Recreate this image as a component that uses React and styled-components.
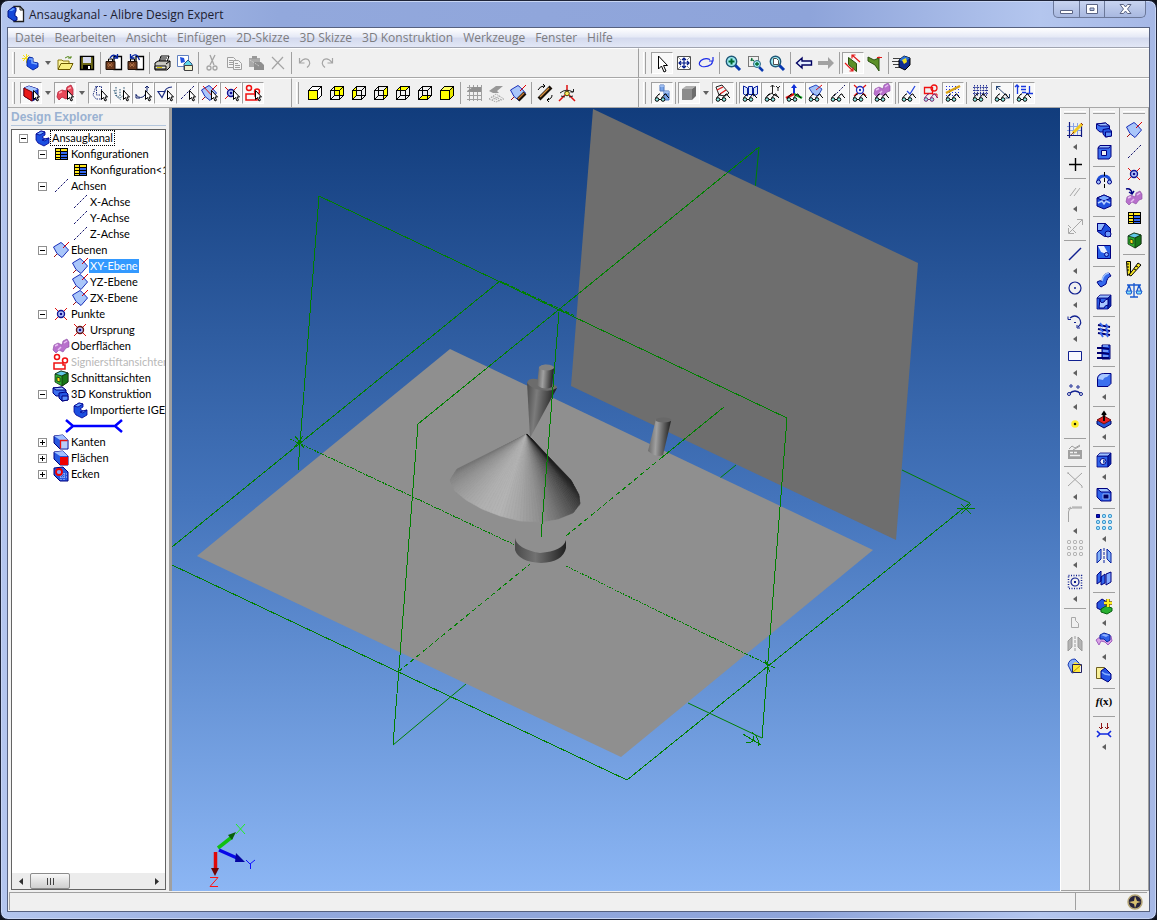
import React, { useState } from "react";
import styled, { createGlobalStyle } from "styled-components";

/* ---------- small drawings shared by several icons ---------- */

const Glasses = ({ color = "#000" }) => (
  <g fill='none' stroke={color}>
    <path d='M3.500 15L7 11h1M9.500 15l3.500-4h1l1 2 2 2M7 16.500h2' />
    <circle cx='5' cy='16.500' r='1.800' fill='#8ff0e8' />
    <circle cx='11' cy='16.500' r='1.800' fill='#8ff0e8' />
  </g>
);

const Cursor = () => (
  <path d='M12.500 7.500v9l2-2 1.500 3.500 1.500-.800-1.500-3.200h2.500z' fill='#fff' stroke='#000' />
);

const Block = () => (
  <g stroke='#000090' strokeWidth='.8'>
    <path d='M4 6l5-3 4 1v3l-3 2 3 2 4-1v5l-5 3-6-3-2-3z' fill='#1c4fe0' />
    <path d='M4 6l5-3 4 1-5 3z' fill='#6fa4ff' />
    <path d='M10 12l3-1 4-1-4 3z' fill='#5c92ff' />
  </g>
);

const Plane = () => (
  <g>
    <path d='M3 17L17 3' stroke='#a01010' />
    <path d='M2.500 7l7.500-4.500 2.500 2 5 5.500-6.500 7.500-5-4z' fill='#a9c6fa' stroke='#1a2fb8' />
    <path d='M12 8l6-6' stroke='#e00000' />
  </g>
);

const Cross = ({ ring = "#101090" }) => (
  <g>
    <path d='M4 4l12 12M16 4L4 16' stroke='#e01010' />
    <circle cx='10' cy='10' r='3.500' fill='#b8c8ff' stroke={ring} strokeWidth='1.400' />
    <circle cx='10' cy='10' r='1.300' fill='#101090' />
  </g>
);

const Surface = () => (
  <g>
    <path
      d='M2 14l1-5 4-2 4 2 1-4 4-2 2 3v5l-3 1-3 4-4-2-3 3z'
      fill='#b870cc'
      stroke='#8848a0'
      strokeWidth='.6'
    />
    <path d='M4 10l3-1.500M13 7l3-2M7 14l3-3' stroke='#e8c0f2' strokeWidth='1.500' fill='none' />
  </g>
);

const Redline = () => (
  <g fill='none' stroke='#f01010' strokeWidth='1.500'>
    <circle cx='6' cy='5' r='2.500' />
    <circle cx='14' cy='8.500' r='2.500' />
    <path d='M3 11h9v2h2v4H3z' />
  </g>
);

const Sheet = () => (
  <g shapeRendering='crispEdges'>
    <path d='M4 4h13v12H4z' fill='#3468f0' />
    <path d='M4 4h5v12H4z' fill='#ffe820' />
    <path d='M4 4h13v3H4z' fill='#ffe820' />
    <path d='M4.500 4.500h12v11h-12zM9.500 4v12M4 7.500h13M4 10.500h13M4 13.500h13' fill='none' stroke='#000' />
  </g>
);

const Axis = () => (
  <path d='M4 16L17 3' stroke='#10106a' strokeDasharray='2.500 1.500' />
);

const Section = () => (
  <g stroke='#103010' strokeWidth='.8'>
    <path d='M4 6l6-3 7 2v9l-6 4-7-4z' fill='#2fae2f' />
    <path d='M4 6l6-3 7 2-6 3z' fill='#62c8e8' />
    <path d='M11 8l6-3v9l-6 4z' fill='#187818' />
    <path d='M6 9l3 1v4l-3-1z' fill='#ffe020' />
  </g>
);

const Cube = ({ front = "#fff", top = "#fff", side = "#fff" }) => (
  <g stroke='#000' shapeRendering='crispEdges'>
    <path d='M3.500 7.500l4-4h9l-4 4z' fill={top} />
    <path d='M12.500 7.500l4-4v9l-4 4z' fill={side} />
    <path d='M3.500 7.500h9v9h-9z' fill={front} />
  </g>
);

const Wire = ({ children }) => (
  <g stroke='#000' fill='none' shapeRendering='crispEdges'>
    {children}
    <path d='M3.500 7.500h9v9h-9zM7.500 3.500h9v9h-9zM3.500 7.500l4-4M12.500 7.500l4-4M3.500 16.500l4-4M12.500 16.500l4-4' />
  </g>
);

const Solid = ({ fill = "#2f64ea", light = "#9cc0ff", dark = "#0a2aa8" }) => (
  <g stroke='#000080' strokeWidth='.8'>
    <path d='M3 6h11v11H3z' fill={fill} />
    <path d='M3 6l3-3h11l-3 3z' fill={light} />
    <path d='M14 6l3-3v11l-3 3z' fill={dark} />
  </g>
);

const Book = () => (
  <g>
    <path d='M10 3.500h7.500v13H10z' fill='#fff' stroke='#000' strokeWidth='1.300' />
    <path d='M2 8.500h9v8H2z' fill='#6b3a1e' stroke='#201008' />
    <path d='M4.500 8V6h4v2' fill='none' stroke='#000' />
    <path d='M4 10l4 4M8 10l-4 4M3 12h6' stroke='#c08050' strokeWidth='.7' />
  </g>
);

const Lens = () => (
  <g>
    <path d='M12 12l5 5' stroke='#0838b0' strokeWidth='3' />
    <circle cx='8.500' cy='8.500' r='5.200' fill='#9eeaf0' stroke='#205878' strokeWidth='1.400' />
  </g>
);

const Dots = ({ color, fill }) => (
  <g fill={fill} stroke={color}>
    {[4, 10, 16].map((y) =>
      [4, 10, 16].map((x) => <rect key={x + "-" + y} x={x - 1.5} y={y - 1.5} width='3' height='3' rx='1' />)
    )}
  </g>
);

const Mesh = ({ color }) => (
  <path
    d='M3 4.500h15M3 8.500h15M3 12.500h15M3 16.500h15M5.500 2v16M9.500 2v16M13.500 2v16M17.500 2v16'
    stroke={color}
    fill='none'
    shapeRendering='crispEdges'
  />
);

const MirrorShape = ({ fill, color }) => (
  <g fill={fill} stroke={color}>
    <path d='M3 7l4-4v10l-4 4zM17 7l-4-4v10l4 4z' />
    <path d='M10 2v16' strokeDasharray='3 1' />
  </g>
);

const icons = {
  newPart: (
    <g>
      <path d='M5.500 1v9M1 5.500h9M2 2l6 6M8 2L2 8' stroke='#f4dc20' />
      <path d='M6 8l2-4 4 1v4l5 1v4l-5 3-6-4z' fill='#1c50e8' stroke='#0828a0' />
      <path d='M8 6l3 0v4l5 1' stroke='#78a8ff' fill='none' strokeWidth='1.500' />
    </g>
  ),
  open: (
    <g>
      <path d='M3 16V7h4l1 1h6v3' fill='#fff7a0' stroke='#8a7a10' />
      <path d='M3 16.500l3-6h12l-3 6z' fill='#f8f080' stroke='#6a5a00' />
      <path d='M10 5q3-3 6 0v-2M16 5h-3' stroke='#5a8a20' fill='none' />
    </g>
  ),
  save: (
    <g>
      <path d='M3.500 3.500h13v13h-13z' fill='#6e6a18' stroke='#000' strokeWidth='1.400' />
      <path d='M6 4h8v6H6z' fill='#d8dcf0' />
      <path d='M6 12h8v5H6z' fill='#000' />
      <path d='M11 13h2v3h-2z' fill='#fff' />
    </g>
  ),
  checkIn: (
    <g>
      <Book />
      <path d='M6 5q3-5 7-1M13.500 1v4h-4' stroke='#0020a0' fill='none' strokeWidth='1.300' />
    </g>
  ),
  checkOut: (
    <g>
      <Book />
      <path d='M4.500 1v4h4M4.500 5q4-5 7-2l2 4' stroke='#0020a0' fill='none' strokeWidth='1.300' />
    </g>
  ),
  print: (
    <g stroke='#000'>
      <path d='M6 9l2-6h8l-2 6z' fill='#fff' />
      <path d='M8 5h6M7 7h6' />
      <path d='M2 10l3-2h12v6l-3 3H2z' fill='#c8c8c0' />
      <path d='M2 13h11v3H2zM13 11l4-3' fill='#e8e8d8' />
      <path d='M4 14.500h5' stroke='#d8c800' />
    </g>
  ),
  publish: (
    <g>
      <path d='M2.500 2.500h11v11h-11z' fill='#fff' stroke='#6080c0' />
      <path d='M5 4l4 1 1 4-4 1z' fill='#2050e0' />
      <path d='M9 11l4-4 4 4v6H9z' fill='#60d8e8' stroke='#305080' />
      <path d='M9.500 12.500h8v5h-8z' fill='#f0f0c8' stroke='#404040' />
    </g>
  ),
  cut: (
    <g stroke='#a4a4a4' fill='none' strokeWidth='1.300'>
      <path d='M8 2l4 10M13 2L8 12' />
      <circle cx='7' cy='15' r='2' />
      <circle cx='13' cy='15' r='2' />
    </g>
  ),
  copy: (
    <g stroke='#a0a0a0' fill='#f4f4f4'>
      <path d='M3.500 4.500h6l2 2v8h-8zM5 7.500h4M5 9.500h4M5 11.500h4' />
      <path d='M9.500 7.500h5l3 3v6h-8zM11 10.500h3M11 12.500h5M11 14.500h5' />
    </g>
  ),
  paste: (
    <g>
      <path d='M3 5h11v9H3z' fill='#aaa' />
      <path d='M6 3h5v3H6z' fill='#999' />
      <path d='M8 9h7l3 3v5H8z' fill='#8e8e8e' />
      <path d='M4 7l9 6' stroke='#ddd' strokeDasharray='1 1' />
    </g>
  ),
  remove: <path d='M4 4l12 12M15 4L4 16' stroke='#a4a4a4' strokeWidth='1.200' />,
  undo: <path d='M4.500 5v5h5M5 9.500q4-5 8-3 4 4-1 8' stroke='#a4a4a4' fill='none' strokeWidth='1.200' />,
  redo: <path d='M15.500 5v5h-5M15 9.500q-4-5-8-3-4 4 1 8' stroke='#a4a4a4' fill='none' strokeWidth='1.200' />,
  pointer: <path d='M6.500 3v13l3-3 2.500 6 2-1-2.500-5.500h4z' fill='#fff' stroke='#000' />,
  pan: (
    <g fill='none'>
      <path d='M3.500 3.500h13v13h-13z' stroke='#505050' fill='#fff' />
      <path d='M4 4l3 3M16 4l-3 3M4 16l3-3M16 16l-3-3' stroke='#909090' />
      <path d='M10 5v10M5 10h10M8 7l2-2 2 2M8 13l2 2 2-2M7 8l-2 2 2 2M13 8l2 2-2 2' stroke='#001888' strokeWidth='1.200' />
    </g>
  ),
  rotate: (
    <path
      d='M14 6.500q-5-2-9 1-4 4 1 6 5 1 9-2 2-2 1-4M17 4v4h-4'
      stroke='#1828e8'
      fill='none'
      strokeWidth='1.200'
    />
  ),
  zoomIn: (
    <g>
      <Lens />
      <path d='M8.500 5.500v6M5.500 8.500h6' stroke='#006830' strokeWidth='2' />
    </g>
  ),
  zoomWindow: (
    <g>
      <path d='M3.500 3.500h10v10h-10z' stroke='#000' fill='none' strokeDasharray='1 1' />
      <path d='M14 14l4 4' stroke='#0838b0' strokeWidth='2.500' />
      <circle cx='12' cy='11' r='3.500' fill='#9eeaf0' stroke='#306888' />
      <path d='M12 9v4M10 11h4M6 6l3 2M7 5l-1 3' stroke='#006830' strokeWidth='1.300' />
    </g>
  ),
  zoomFit: (
    <g>
      <Lens />
      <path d='M6.500 5.500h3l2 2v4h-5z' fill='#fff' stroke='#505050' />
    </g>
  ),
  back: <path d='M2.500 10L8 5v3h9.500v4H8v3z' fill='#e4eeff' stroke='#000060' strokeWidth='1.400' />,
  next: <path d='M18 10l-6-6v4H2v4h10v4z' fill='#a2a2a2' />,
  flipPlane: (
    <g>
      <path d='M5.500 4.500l8 6v8l-8-7z' fill='#5c9028' stroke='#2a5010' />
      <path d='M9 2l8 7M9 5.500V2h3.500M2 10l8 8M10 14.500V18H6.500' stroke='#e01818' fill='none' strokeWidth='1.200' />
    </g>
  ),
  normalPlane: (
    <g>
      <path d='M3 4l6 3 5-2v13l-4-6-7-4z' fill='#5c9028' stroke='#2a5010' />
      <path d='M14 5.500v-2M12 4.500h5' stroke='#e01818' />
    </g>
  ),
  render: (
    <g>
      <path d='M1 5.500h8M0 8.500h9M1 11.500h8M3 14.500h6' stroke='#404040' />
      <path d='M7 7l5-4 6 2v7l-5 5-6-3z' fill='#102c90' stroke='#000' />
      <path d='M7 7l5-4 6 2-5 4z' fill='#2a70d8' />
      <path d='M10 7l4-2 1 4-3 2z' fill='#f0e020' />
    </g>
  ),
  pickSolid: (
    <g>
      <path d='M3 5l5-2 9 3v9l-6 3-8-5z' fill='#2450d8' stroke='#000080' />
      <path d='M3 5l5-2 9 3-6 3z' fill='#a8c8ff' />
      <path d='M3 5l8 4v9l-8-5z' fill='#e81818' stroke='#800000' />
      <Cursor />
    </g>
  ),
  pickSurface: (
    <g>
      <path d='M2 14l1-5 4-2 4 1 1-4 4-2 2 4v6l-4 1-3 3-4-2-3 3z' fill='#e84858' stroke='#b02038' strokeWidth='.8' />
      <path d='M4 10l3-1.500M13 6l3-1.500' stroke='#ffb0b8' fill='none' strokeWidth='1.500' />
      <Cursor />
    </g>
  ),
  pickBody: (
    <g>
      <path d='M7.500 3.500h5v8l5 1M7 3l-3 9 3 4h6M7.500 4v8h4' fill='none' stroke='#203080' strokeDasharray='1.500 1' />
      <Cursor />
    </g>
  ),
  pickFace: (
    <g>
      <path d='M5 4v8l4 3 4-3V4M3 7l2 6 5 4M9 6v8' fill='none' stroke='#205070' strokeDasharray='1.500 1.200' />
      <Cursor />
    </g>
  ),
  pickEdge: (
    <g>
      <path d='M3 12q5 5 9 0 3-4 2-8M12 5l2-2 2 2' fill='none' stroke='#10206a' />
      <path d='M3 11v4h4' stroke='#10206a' fill='none' />
      <Cursor />
    </g>
  ),
  pickSketch: (
    <g>
      <path d='M3 8.500h7l-3 6zM9 11q1-7 8-7' fill='none' stroke='#1c2c80' strokeWidth='1.200' />
      <Cursor />
    </g>
  ),
  pickAxis: (
    <g>
      <Axis />
      <Cursor />
    </g>
  ),
  pickPlane: (
    <g>
      <Plane />
      <path d='M4 3l12 13' stroke='#e01010' />
      <Cursor />
    </g>
  ),
  pickPoint: (
    <g>
      <Cross />
      <Cursor />
    </g>
  ),
  pickRedline: (
    <g>
      <Redline />
      <Cursor />
    </g>
  ),
  front: <Cube front='#ffff00' />,
  rear: (
    <Wire>
      <path d='M7.500 3.500h9v9h-9z' fill='#ffff00' />
    </Wire>
  ),
  left: (
    <Wire>
      <path d='M3.500 7.500l4-4v9l-4 4z' fill='#ffff00' />
    </Wire>
  ),
  right: (
    <Wire>
      <path d='M12.500 7.500l4-4v9l-4 4z' fill='#ffff00' />
    </Wire>
  ),
  top: (
    <Wire>
      <path d='M3.500 7.500l4-4h9l-4 4z' fill='#ffff00' />
    </Wire>
  ),
  bottom: (
    <Wire>
      <path d='M3.500 16.500l4-4h9l-4 4z' fill='#ffff00' />
    </Wire>
  ),
  iso: <Cube front='#ffff00' top='#ffff60' side='#e8e800' />,
  gridGrey: (
    <g>
      <Mesh color='#a0a0a0' />
      <path d='M3 8l6-4h8v5H8z' fill='#909090' />
    </g>
  ),
  stackGrey: (
    <g>
      <path d='M3 8l7-5h7l-6 5 2 2H7z' fill='#989898' />
      <path d='M3 16l7-5 8 5-8 3zM5 14l9 4M14 13l-8 4M7 13l9 4' fill='none' stroke='#a8a8a8' strokeDasharray='1.500 1' />
    </g>
  ),
  lookAt: (
    <g>
      <Plane />
      <path d='M10 17l7-7' stroke='#181008' strokeWidth='4' />
      <path d='M10 16l6-6' stroke='#c87830' strokeWidth='1.500' />
    </g>
  ),
  orient: (
    <g>
      <path d='M4 16L16 4' stroke='#181008' strokeWidth='4' />
      <path d='M5 14l9-9' stroke='#d89040' strokeWidth='1.500' />
      <path d='M3 7q2-4 6-4M8 1l2 2-2 2M17 12q0 4-5 5M14 15l-2 2 2 2' stroke='#000' fill='none' />
    </g>
  ),
  triad: (
    <g>
      <path d='M10 8V2M8 12l-6 6M12 12l6 6' stroke='#e01010' strokeWidth='1.500' />
      <path d='M3 10q6-5 13-1M16.500 6v3h-3M4 13l4 1M12 14l4-1' stroke='#202020' fill='none' />
      <circle cx='10' cy='10.500' r='2.300' fill='#ffe860' stroke='#404000' />
    </g>
  ),
  showParts: (
    <g>
      <path d='M8 2h4v6H8zM12 8h5v9h-5z' fill='#78a4e8' stroke='#5078c0' />
      <path d='M8 3h4M12 9h5' stroke='#c8dcff' />
      <Glasses />
    </g>
  ),
  shaded: (
    <g>
      <path d='M3 6h10v11H3z' fill='#8c8c8c' />
      <path d='M3 6l4-3h10l-4 3z' fill='#b0b0b0' />
      <path d='M13 6l4-3v10l-4 4z' fill='#6c6c6c' />
    </g>
  ),
  showCyl: (
    <g>
      <path d='M3 4l6-2 7 8-4 3-6-1z' fill='#f4f4f4' stroke='#202020' />
      <path d='M4 7l6-3M7 11l6-4' stroke='#e01818' strokeWidth='1.300' />
      <Glasses />
    </g>
  ),
  showSection: (
    <g>
      <path d='M3.500 3l4 2v8l-4-2zM17.500 3l-4 2v8l4-2zM8.500 3.500h4v8h-4z' fill='#dce8ff' stroke='#0820a0' />
      <Glasses />
    </g>
  ),
  showOrigin: (
    <g>
      <path d='M10.500 2v9l6 3M8.500 4l2-2 2 2M5 13l5-3M14 3l2 2 2-2M16 5v3' stroke='#202020' fill='none' />
      <Glasses />
    </g>
  ),
  showTriad: (
    <g>
      <path d='M10 11V3' stroke='#1030d8' strokeWidth='2' />
      <path d='M10 11l8 4' stroke='#10a020' strokeWidth='2.500' />
      <path d='M10 11l-8 4' stroke='#e01010' strokeWidth='2.500' />
      <path d='M7 5l3-4 3 4z' fill='#1030d8' />
      <Glasses />
    </g>
  ),
  showPlane: (
    <g>
      <path d='M3 5l7-3 6 4-4 7-5-2z' fill='#a0c0f8' stroke='#2848c0' />
      <path d='M10 7l6-5' stroke='#e01010' />
      <Glasses />
    </g>
  ),
  showAxis: (
    <g>
      <path d='M6 13L17 2' stroke='#101060' strokeDasharray='2 1.500' />
      <Glasses />
    </g>
  ),
  showPoint: (
    <g>
      <path d='M4 2l12 11M16 2L4 13' stroke='#e01010' strokeWidth='1.200' />
      <circle cx='10' cy='7' r='3.500' fill='#fff' stroke='#2030c0' strokeWidth='1.300' />
      <circle cx='10' cy='7' r='1.200' fill='#2030c0' />
      <Glasses />
    </g>
  ),
  showSurface: (
    <g>
      <g transform='translate(0 -3)'>
        <Surface />
      </g>
      <Glasses />
    </g>
  ),
  showSketch: (
    <g>
      <path d='M8 8l3 3 5-8' stroke='#2848e0' fill='none' strokeWidth='1.300' />
      <Glasses />
    </g>
  ),
  showRedline: (
    <g>
      <path d='M3.500 4.500h8v6h-8z' fill='none' stroke='#f01010' strokeWidth='1.300' />
      <circle cx='13' cy='5' r='3' fill='none' stroke='#f01010' strokeWidth='1.300' />
      <path d='M11 11h5v4' fill='none' stroke='#f01010' />
      <Glasses color='#7a2070' />
    </g>
  ),
  showPen: (
    <g>
      <path d='M3 3.500h15M3 6.500h15M3 9.500h15M3 12.500h15' stroke='#2030e0' strokeDasharray='1 2' />
      <path d='M3 10l14-7' stroke='#d8a010' strokeWidth='2.500' />
      <Glasses />
    </g>
  ),
  showGrid: (
    <g>
      <path
        d='M4.500 2v11M7.500 2v11M10.500 2v11M13.500 2v11M16.500 2v11M3 4.500h15M3 7.500h15M3 10.500h15'
        stroke='#2c3898'
        strokeDasharray='1.500 .8'
      />
      <Glasses />
    </g>
  ),
  showDim: (
    <g>
      <path d='M4 3l13 12M4.500 7V3.500h4M17.500 11v4h-4' stroke='#284878' fill='none' />
      <Glasses />
    </g>
  ),
  showConstraint: (
    <g>
      <path d='M3.500 2v9M1 4l2-2 2 2M7 3.500h5M7 6.500h5M8 9.500h4M15.500 3v7M12 10.500h7' stroke='#1838e0' fill='none' strokeWidth='1.300' />
      <Glasses />
    </g>
  ),
  sketch: (
    <g>
      <path d='M4.500 3v15M8.500 3v13M12.500 3v13M2 6.500h15M2 10.500h14' stroke='#88a4e8' />
      <path d='M2 15.500h15M4.500 2v16M16.500 4v13' stroke='#101880' fill='none' strokeWidth='1.200' />
      <path d='M8 13L17 4' stroke='#f0c820' strokeWidth='3' />
      <path d='M6 15l3-3M16 3l2 2' stroke='#903010' />
    </g>
  ),
  plus: <path d='M10.500 4v13M4 10.500h13' stroke='#000' strokeWidth='1.400' />,
  parallel: <path d='M5 14l6-8M9 14l6-8' stroke='#a8a8a8' />,
  dim: <path d='M4 17L17 4M12 3.500h5.500v5.500M3.500 12v5.500H9M3 9l3 3M11 17l-3-3' stroke='#a8a8a8' fill='none' />,
  line: <path d='M4 16L16 4' stroke='#102090' strokeWidth='1.400' />,
  circle: (
    <g>
      <circle cx='10' cy='10' r='6' fill='none' stroke='#102090' strokeWidth='1.200' />
      <circle cx='10' cy='10' r='1' fill='#102090' />
    </g>
  ),
  arc: (
    <g>
      <path d='M5 6q5-4 9 0 4 5-1 9' fill='none' stroke='#102090' strokeWidth='1.200' />
      <path d='M3 4.500v3h3M9 10.500h2M12 13v3h3' stroke='#102090' fill='none' />
    </g>
  ),
  rect: <path d='M3.500 5.500h13v9h-13z' fill='#f8f8ff' stroke='#102090' />,
  spline: (
    <g fill='#eee' stroke='#102090'>
      <path d='M4 14q6-6 12 0' fill='none' strokeWidth='1.300' />
      <circle cx='4' cy='14' r='1.500' />
      <circle cx='16' cy='14' r='1.500' />
      <circle cx='6' cy='6' r='1.200' />
      <circle cx='13' cy='7' r='1.200' />
    </g>
  ),
  point: <circle cx='10' cy='10' r='2.500' fill='#202000' stroke='#fff030' strokeWidth='2.500' />,
  keyboard: (
    <g>
      <path d='M3 8h14v9H3z' fill='#a0a0a0' />
      <path d='M5 10.500h3M9 10.500h3M5 13.500h10' stroke='#f0f0f0' strokeWidth='1.300' />
      <path d='M4 7l3-3 3 2 5-3M8 8l7-4' stroke='#a0a0a0' fill='none' />
    </g>
  ),
  trim: <path d='M3 3l14 13M17 3L3 16M2 3h2M16 17h2' stroke='#a4a4a4' />,
  fillet: <path d='M3.500 18V8q0-4 4-4H17M3 5l3-2M7 3h10' stroke='#a4a4a4' fill='none' />,
  patternGrey: <Dots color='#a4a4a4' fill='#eee' />,
  offset: (
    <g fill='none' stroke='#102090'>
      <path d='M3.500 3.500h13v13h-13z' strokeDasharray='1 1.500' strokeWidth='1.500' />
      <circle cx='10' cy='10' r='4' strokeWidth='1.200' />
      <path d='M9 10h2' strokeWidth='2' />
    </g>
  ),
  profile: <path d='M6.500 5.500h4v3l3 3v4h-7z' fill='none' stroke='#a8a8a8' />,
  mirrorGrey: <MirrorShape fill='#b4b4b4' color='#9a9a9a' />,
  project: (
    <g>
      <path d='M3 9q1-6 7-6l4 4v8l-7 2z' fill='#8ab0f8' stroke='#1838b0' />
      <path d='M7 9l3-3 5 2v9H7z' fill='#ffe838' />
      <path d='M7.500 8.500h9v8h-9z' fill='none' stroke='#202060' />
      <path d='M8 16l8-7' stroke='#b09010' />
    </g>
  ),
  boss: (
    <g stroke='#000080'>
      <path d='M2.500 4l9-1 4 3v6H6l-3.500-3z' fill='#3c70f0' />
      <path d='M2.500 4l9-1 4 3H6z' fill='#9cc0ff' />
      <path d='M9 9.500l6-1 2.500 2.500v5l-6 1-2.500-3z' fill='#2456e0' />
      <path d='M11.500 12h6v4l-6 1z' fill='#5a8cf8' />
    </g>
  ),
  cutOut: (
    <g stroke='#000080'>
      <path d='M4 6l2-2.500h11v11L15 17H4z' fill='#3c70f0' />
      <path d='M4 6l2-2.500h11L15 6z' fill='#9cc0ff' />
      <path d='M7.500 8.500h5v5h-5z' fill='#f0f0f0' />
    </g>
  ),
  revolve: (
    <g>
      <path d='M4 12q0-6 6-6t6 6' fill='none' stroke='#2050d8' strokeWidth='3' />
      <circle cx='4.500' cy='12' r='2' fill='#a0c0ff' stroke='#000080' />
      <circle cx='15.500' cy='12' r='2' fill='#a0c0ff' stroke='#000080' />
      <path d='M10.500 2v16' stroke='#000' strokeDasharray='4 2' />
    </g>
  ),
  revolveCut: (
    <g stroke='#000080'>
      <path d='M3 6l7-3 7 3v8l-7 3-7-3z' fill='#2050e0' />
      <path d='M3 6l7-3 7 3-7 3z' fill='#78a8ff' />
      <path d='M4 11l4-2 2 3 2-3 4 2' stroke='#b8d0ff' fill='none' strokeWidth='1.500' />
    </g>
  ),
  loft: (
    <g stroke='#000080'>
      <path d='M3.500 3.500h8l5 5v8h-6l-7-5z' fill='#2050e0' />
      <path d='M3.500 3.500h8l-4 7h-4z' fill='#90b8ff' />
      <circle cx='14' cy='14' r='3' fill='#6c98fc' />
    </g>
  ),
  loftCut: (
    <g stroke='#000080'>
      <path d='M3.500 3.500h13v13h-13z' fill='#2860e8' />
      <path d='M4 4h6l5 9-8-3z' fill='#e8f0ff' stroke='none' />
      <circle cx='12.500' cy='12.500' r='2' fill='#88b0ff' />
    </g>
  ),
  sweep: (
    <g stroke='#000080'>
      <path d='M3 12q3-2 5-1 1-8 7-8l2 3q-4 1-5 8l-5 3q-2-1-4-5z' fill='#3468ec' />
      <path d='M8 11q1-7 7-8' fill='none' stroke='#a0c4ff' strokeWidth='1.500' />
    </g>
  ),
  sweepCut: (
    <g stroke='#000080'>
      <Solid />
      <path d='M6 7q0 5 4 3 1-3 4-3v6q-3 0-4 3H5z' fill='#a8c8ff' />
    </g>
  ),
  helix: (
    <g>
      <path d='M4 5l12 2M4 9l12 2M4 13l12 2' stroke='#000070' strokeWidth='2' />
      <path d='M6 3l3 4M12 4l2 4M6 8l3 4M12 8l2 5M6 12l3 5M12 13l2 4' stroke='#3868f0' strokeWidth='1.800' />
    </g>
  ),
  helixCut: (
    <g>
      <path d='M8 3h8v14H8z' fill='#2454e8' stroke='#000070' />
      <path d='M3 6h6l6 1M3 11h6l6 1M3 16h6l6 0' stroke='#000070' strokeWidth='1.800' fill='none' />
      <path d='M9 4h5M9 9h5M9 14h5' stroke='#88b0ff' strokeWidth='1.500' />
    </g>
  ),
  round: (
    <g stroke='#000080'>
      <path d='M3.500 9q0-5 6-5.500h7.500v10l-3 3H3.500z' fill='#3c70ee' />
      <path d='M4 9q1-5 6-5h6l-3 3q-3 0-4 3z' fill='#a8c8ff' stroke='none' />
    </g>
  ),
  draft: (
    <g>
      <path d='M3 11l7-4 7 4v3l-7 4-7-4z' fill='#2458d8' stroke='#000060' />
      <path d='M3 10l7-4 7 4-7 4z' fill='#e82020' stroke='#701010' />
      <path d='M10 11V3M8 5l2-3 2 3' stroke='#000' strokeWidth='1.800' fill='none' />
    </g>
  ),
  hole: (
    <g>
      <Solid />
      <circle cx='9' cy='11.500' r='3' fill='#f0f4ff' stroke='#000080' />
      <path d='M9 9.500a2 2 0 010 4z' fill='#2050c0' />
    </g>
  ),
  shell: (
    <g>
      <path d='M3 4.500h10l4 3.500v9H7L3 13z' fill='#2f64ea' stroke='#000080' />
      <path d='M3 4.500h10l4 3.500H7z' fill='#a0c4ff' stroke='#000080' />
      <path d='M9 10h6v5H9z' fill='#000060' stroke='#88b0ff' />
    </g>
  ),
  pattern: (
    <g>
      <Dots color='#2080c0' fill='#98e0ff' />
      <path d='M2.500 2.500h3v3h-3z' fill='#0010c0' stroke='#000080' />
    </g>
  ),
  mirror: <MirrorShape fill='#80b0f8' color='#0820a0' />,
  mirrorPart: (
    <g fill='#3468ec' stroke='#000080'>
      <path d='M3 7l4-4v10l-4 3zM7 9l4-3v9l-4 2z' />
      <path d='M12 6l5-2v10l-5 3z' fill='#80a8ff' />
    </g>
  ),
  addPart: (
    <g>
      <path d='M3 7l5-4 5 3v6l-4 3-6-3z' fill='#2858e0' stroke='#000080' />
      <path d='M7 13l5-3 6 2v3l-5 3-6-2z' fill='#28b030' stroke='#086010' />
      <path d='M14 3v8M10 7h8' stroke='#806000' strokeWidth='3.500' />
      <path d='M14 3v8M10 7h8' stroke='#fff020' strokeWidth='2' />
    </g>
  ),
  thicken: (
    <g>
      <path d='M2 10l5-4 10 0 1 5-4 4-3-3-4-1-2 4z' fill='#d8a0e4' stroke='#a060c0' />
      <path d='M6 5l4-2 6 2v5l-3 2-3-3-4 0z' fill='#3060e8' stroke='#0828a0' />
      <path d='M7 5l3-1 5 1-3 2z' fill='#8cb0ff' />
    </g>
  ),
  importPart: (
    <g>
      <path d='M2.500 3.500h8v11h-8z' fill='#f8f098' stroke='#706020' />
      <path d='M7 7l4-3 3 3 3 3v5l-3 3-7-4z' fill='#2454e4' stroke='#000080' />
      <path d='M8 8l3 2 5 1' stroke='#88b0ff' fill='none' strokeWidth='1.500' />
    </g>
  ),
  fx: (
    <text x='10' y='13' textAnchor='middle' fontFamily='Liberation Serif, serif' fontSize='11' fontWeight='bold'>
      <tspan fontStyle='italic'>f</tspan>(x)
    </text>
  ),
  suppress: (
    <g fill='none'>
      <path d='M7.500 3v6M5 7l2 2 2-2M13.500 3v6M11 7l2 2 2-2' stroke='#901818' />
      <path d='M3 11l3 3-3 3M17 11l-3 3 3 3M6 14h8' stroke='#1028e0' strokeWidth='1.600' />
    </g>
  ),
  plane: <Plane />,
  axis: <Axis />,
  pointRef: <Cross />,
  surfaceRef: (
    <g>
      <g transform='translate(0 2)'>
        <Surface />
      </g>
      <path d='M2 3q5-1 6 4M5 6l3 2 2-3' stroke='#000080' fill='none' strokeWidth='1.500' />
    </g>
  ),
  sheet: <Sheet />,
  section: <Section />,
  measure: (
    <g>
      <path d='M2.500 3.500h4v12l-3 2z' fill='#f0e020' stroke='#000' />
      <path d='M5 17l9-12 3 2-10 11z' fill='#f8e828' stroke='#000' />
      <path d='M3 6h2M3 9h2M3 12h2M10 11l2 1M12 8l2 1' stroke='#000' />
    </g>
  ),
  balance: (
    <g fill='none' stroke='#1858d0' strokeWidth='1.300'>
      <path d='M10 3v14M6 17h8M3 5h14M5 5l-2 6M5 5l2 6M15 5l-2 6M15 5l2 6' />
      <path d='M2 11h6l-1 3H3zM12 11h6l-1 3h-4z' fill='#80e0f8' strokeWidth='1' />
    </g>
  ),
  part: <Block />,
  origin: <Cross ring='#601010' />,
  surface: <Surface />,
  redline: <Redline />,
  construct: (
    <g stroke='#000080'>
      <path d='M2 4l9-1 4 3v6H5l-3-3z' fill='#3c70f0' />
      <path d='M2 4l9-1 4 3H5z' fill='#9cc0ff' />
      <path d='M8 9l7-1 2 2v6l-6 1-3-3z' fill='#2456e0' />
      <path d='M11 12h6v4l-6 1z' fill='#5a8cf8' />
    </g>
  ),
  edges: (
    <g>
      <path d='M3 4l9-1 5 5v9H9l-6-6z' fill='#2858e0' stroke='#000080' />
      <path d='M3 4l9-1 5 5H9z' fill='#a0c0ff' />
      <path d='M9.500 8.500h7v8h-7z' fill='#b8ccf8' />
      <path d='M9.500 16.500v-8h7' fill='none' stroke='#e81010' strokeWidth='1.300' />
    </g>
  ),
  faces: (
    <g>
      <path d='M3 4l9-1 5 5v9H9l-6-6z' fill='#2858e0' stroke='#000080' />
      <path d='M3 4l9-1 5 5H9z' fill='#a0c0ff' />
      <path d='M9 9h8v8H9z' fill='#f00000' />
    </g>
  ),
  corners: (
    <g>
      <path d='M3 4l9-1 5 5v9H9l-6-6z' fill='#2858e0' stroke='#000080' />
      <path d='M9 10h8M9 13h8M10 9v8M13 9v8' stroke='#c0d4ff' strokeDasharray='1 1' />
      <circle cx='8' cy='8' r='3' fill='#88a8ff' stroke='#f00000' strokeWidth='1.800' />
    </g>
  ),
};

const Icon = ({ name }) => (
  <IconSvg viewBox='0 0 20 20' aria-hidden='true'>
    {icons[name]}
  </IconSvg>
);

/* ---------- data ---------- */
/* "|" is a divider, ">" a drop arrow, "*" marks a pressed tool */

const menus = [
  "Datei",
  "Bearbeiten",
  "Ansicht",
  "Einfügen",
  "2D-Skizze",
  "3D Skizze",
  "3D Konstruktion",
  "Werkzeuge",
  "Fenster",
  "Hilfe",
];

const fileTools = "newPart > open save | checkIn checkOut | print publish | cut copy paste remove | undo redo";
const viewTools = "*pointer pan rotate | zoomIn zoomWindow zoomFit | back next | *flipPlane normalPlane | render";
const pickTools =
  "*pickSolid > *pickSurface > *pickBody *pickFace *pickEdge *pickSketch *pickAxis *pickPlane *pickPoint *pickRedline";
const orientTools = "front rear left right top bottom iso | gridGrey stackGrey lookAt | orient triad";
const showTools =
  "*showParts | *shaded > *showCyl | *showSection *showOrigin *showTriad *showPlane *showAxis *showPoint *showSurface | *showSketch showRedline *showPen | showGrid *showDim *showConstraint";

const sketchTools =
  "sketch > plus | parallel > dim | line > circle > arc > rect > spline > point | keyboard | trim > fillet > patternGrey > offset > | profile mirrorGrey project";
const featureTools =
  "boss cutOut | revolve revolveCut | loft loftCut | sweep sweepCut | helix helixCut | round > | draft > | hole > shell | pattern > mirror mirrorPart | addPart > thicken > importPart | fx | suppress >";
const refTools = "plane axis pointRef surfaceRef sheet section | measure balance";

const tree = [
  { level: 0, box: "-", icon: "part", text: "Ansaugkanal", root: true },
  { level: 1, box: "-", icon: "sheet", text: "Konfigurationen" },
  { level: 2, icon: "sheet", text: "Konfiguration<1>" },
  { level: 1, box: "-", icon: "axis", text: "Achsen" },
  { level: 2, icon: "axis", text: "X-Achse" },
  { level: 2, icon: "axis", text: "Y-Achse" },
  { level: 2, icon: "axis", text: "Z-Achse" },
  { level: 1, box: "-", icon: "plane", text: "Ebenen" },
  { level: 2, icon: "plane", text: "XY-Ebene" },
  { level: 2, icon: "plane", text: "YZ-Ebene" },
  { level: 2, icon: "plane", text: "ZX-Ebene" },
  { level: 1, box: "-", icon: "pointRef", text: "Punkte" },
  { level: 2, icon: "origin", text: "Ursprung" },
  { level: 1, icon: "surface", text: "Oberflächen" },
  { level: 1, icon: "redline", text: "Signierstiftansichten", muted: true },
  { level: 1, icon: "section", text: "Schnittansichten" },
  { level: 1, box: "-", icon: "construct", text: "3D Konstruktion" },
  { level: 2, icon: "part", text: "Importierte IGES" },
  { dogbone: true },
  { level: 1, box: "+", icon: "edges", text: "Kanten" },
  { level: 1, box: "+", icon: "faces", text: "Flächen" },
  { level: 1, box: "+", icon: "corners", text: "Ecken" },
];

/* rim of the big cone, left to right: x, y, grey level */
const coneRim = [
  [457, 469, 112],
  [450, 480, 132],
  [455, 491, 150],
  [466, 500, 164],
  [482, 509, 176],
  [500, 516, 180],
  [520, 521, 166],
  [540, 522, 146],
  [558, 519, 118],
  [573, 513, 86],
  [580, 504, 60],
  [579, 495, 40],
  [571, 480, 28],
];

/* ---------- parts ---------- */

function Tools({ list, vertical }) {
  return list.split(" ").map((item, index) => {
    if (item === "|") return <Divider key={index} $vertical={vertical} />;
    if (item === ">")
      return (
        <DropButton key={index} $vertical={vertical} aria-label='Mehr'>
          <svg width='6' height='6' viewBox='0 0 6 6'>
            <path d={vertical ? "M5 0v6L1 3z" : "M0 1h6L3 5z"} fill='#606060' />
          </svg>
        </DropButton>
      );
    const name = item.replace("*", "");
    return (
      <ToolButton key={index} $pressed={item[0] === "*"} aria-label={name}>
        <Icon name={name} />
      </ToolButton>
    );
  });
}

function Strip({ list }) {
  return (
    <StripBox role='toolbar'>
      <Grip />
      <Tools list={list} />
    </StripBox>
  );
}

function SideStrip({ list }) {
  return (
    <SideBox role='toolbar'>
      <SideGrip />
      <Tools list={list} vertical />
    </SideBox>
  );
}

function Explorer() {
  const [selected, setSelected] = useState("XY-Ebene");

  return (
    <ExplorerPanel>
      <ExplorerTitle>Design Explorer</ExplorerTitle>
      <TreeBox>
        <TreeList>
          {tree.map((row, index) =>
            row.dogbone ? (
              <TreeRow key={index} $level={2}>
                <svg width='68' height='16' viewBox='-8 0 68 16'>
                  <path d='M1 2l7 6-7 6M57 2l-7 6 7 6M8 8h42' fill='none' stroke='#0000ff' strokeWidth='2.500' />
                </svg>
              </TreeRow>
            ) : (
              <TreeRow key={index} $level={row.level}>
                {row.box && (
                  <Expander aria-label={row.text}>
                    <svg width='9' height='9' viewBox='0 0 9 9' shapeRendering='crispEdges'>
                      <path d='M.5.500h8v8h-8z' fill='#fff' stroke='#909090' />
                      <path d={row.box === "+" ? "M2 4.500h5M4.500 2v5" : "M2 4.500h5"} stroke='#000' />
                    </svg>
                  </Expander>
                )}
                <TreeIcon viewBox='0 0 20 20' $alone={!row.box}>
                  {icons[row.icon]}
                </TreeIcon>
                <TreeLabel
                  $selected={selected === row.text}
                  $root={row.root}
                  $muted={row.muted}
                  onClick={() => setSelected(row.text)}
                >
                  {row.text}
                </TreeLabel>
              </TreeRow>
            )
          )}
        </TreeList>
        <ScrollBar>
          <ScrollArrow aria-label='Links'>
            <svg width='5' height='7' viewBox='0 0 5 7'>
              <path d='M4 0v7L0 3.500z' fill='#303030' />
            </svg>
          </ScrollArrow>
          <Thumb>
            <i />
            <i />
            <i />
          </Thumb>
          <ScrollArrow aria-label='Rechts'>
            <svg width='5' height='7' viewBox='0 0 5 7'>
              <path d='M1 0v7l4-3.500z' fill='#303030' />
            </svg>
          </ScrollArrow>
        </ScrollBar>
      </TreeBox>
    </ExplorerPanel>
  );
}

function Cone() {
  const steps = 6;
  const rim = [];
  coneRim.slice(1).forEach((b, i) => {
    const a = coneRim[i];
    for (let s = 0; s < steps; s++) {
      rim.push(a.map((v, k) => v + ((b[k] - v) * s) / steps));
    }
  });
  rim.push(coneRim[coneRim.length - 1]);

  return rim.slice(1).map(([x, y, grey], i) => {
    const [px, py] = rim[i];
    const fill = `rgb(${grey}, ${grey}, ${grey})`;
    return <path key={i} d={`M527 434L${px} ${py}L${x} ${y}z`} fill={fill} stroke={fill} strokeWidth='.5' />;
  });
}

function Scene() {
  return (
    <SceneSvg viewBox='172 108 888 783' preserveAspectRatio='xMidYMid slice'>
      <defs>
        <linearGradient id='sky' x1='0' y1='0' x2='0' y2='1'>
          <stop offset='0' stopColor='#113c7c' />
          <stop offset='.5' stopColor='#4474bb' />
          <stop offset='1' stopColor='#8cb6f4' />
        </linearGradient>
        <linearGradient id='funnel' x1='0' y1='0' x2='1' y2='.2'>
          <stop offset='0' stopColor='#4a4a4a' />
          <stop offset='.35' stopColor='#7c7c7c' />
          <stop offset='.7' stopColor='#484848' />
          <stop offset='1' stopColor='#181818' />
        </linearGradient>
        <linearGradient id='tube' x1='0' y1='0' x2='1' y2='.1'>
          <stop offset='0' stopColor='#5c5c5c' />
          <stop offset='.4' stopColor='#a0a0a0' />
          <stop offset='.7' stopColor='#606060' />
          <stop offset='1' stopColor='#202020' />
        </linearGradient>
        <linearGradient id='foot' x1='0' y1='0' x2='1' y2='0'>
          <stop offset='0' stopColor='#4a4a4a' />
          <stop offset='.4' stopColor='#727272' />
          <stop offset='1' stopColor='#202020' />
        </linearGradient>
      </defs>
      <rect x='172' y='108' width='888' height='783' fill='url(#sky)' />

      <g fill='none' stroke='#008000'>
        <path d='M759 147L755 190M902 470L970 503M688 703L762 738M393 745L466 684M720 478L736 465' />
      </g>
      <path d='M593 109L918 263L896 540L571 386z' fill='#6e6e6e' />
      <path d='M450 349L873 550L621 757L197 556z' fill='#8f8f8f' />

      <path d='M515 538q2 11 25 15q23-2 26-13v8q-3 14-25 15q-22-1-26-13z' fill='url(#foot)' />
      <Cone />
      <path d='M527 382l3 56l27-50z' fill='url(#funnel)' />
      <path d='M527 383q1-5 9-4l15 4q7 3 6 5q-6 4-16 2q-9-1-14-7z' fill='#6c6c6c' />
      <path d='M539 367q7-5 15 1l-2 19q-8 4-15-2z' fill='url(#tube)' />
      <ellipse cx='546.500' cy='367.500' rx='7.500' ry='3' fill='#828282' />
      <path d='M656 419l15 2l-8 34q-7 3-15-4z' fill='url(#tube)' />
      <ellipse cx='663.500' cy='420' rx='8' ry='2.500' fill='#686868' />

      <g fill='none' stroke='#008000' shapeRendering='crispEdges'>
        <path d='M319 196L787 418L762 738M319 196L298 470' />
        <path d='M759 147L418 424L393 745' />
        <path d='M172 547L500 281M172 565L627 780L970 503' />
        <path d='M500 281L575 316' strokeDasharray='4 2' />
        <path d='M559 312L541 537' />
        <path d='M290 439L515 545M566 566L775 668' strokeDasharray='2 1' />
        <path d='M398 672L530 564M566 536L660 459' strokeDasharray='5 3' />
        <path d='M660 459L724 407M295 436l9 12M303 436l-9 12M765 660l5 12' />
        <path d='M957 508h18M961 504l10 10M971 504l-10 10M743 734l18 11M746 742q8 2 8-6M752 732q8 6 6 14' />
      </g>

      <g fill='none'>
        <path d='M218 848l14-11' stroke='#10c010' strokeWidth='3.500' />
        <path d='M228 835l8-3-4 8z' fill='#086008' />
        <path d='M219 850l18 8' stroke='#0808e8' strokeWidth='3.500' />
        <path d='M236 853l9 9-10 0z' fill='#0404a0' />
        <path d='M215.500 852v18' stroke='#e00808' strokeWidth='3.500' />
        <path d='M211 868h8l-4 8z' fill='#700404' />
        <path d='M236 824l9 10M245 824l-9 10' stroke='#20f020' />
        <path d='M246 860l4 4 5-4M250.500 864v5' stroke='#1010ff' />
        <path d='M210 877.500h8l-8 9h8' stroke='#ff1010' />
      </g>
    </SceneSvg>
  );
}

function App() {
  return (
    <Window>
      <GlobalStyle />
      <TitleBar>
        <svg width='18' height='18' viewBox='0 0 18 18'>
          <path d='M7 1.500h6l3.500 3.500v11.500H7z' fill='#fff' stroke='#202020' strokeWidth='1.300' />
          <path d='M13 1v4h4' fill='none' stroke='#202020' />
          <path d='M1 6l5-4 3 1v3L8 8v3l2 1v3l-3 1-6-4z' fill='#1448d8' stroke='#001080' />
          <path d='M2 6l4-3 2 1-3 2z' fill='#60a0ff' />
        </svg>
        <TitleText>Ansaugkanal - Alibre Design Expert</TitleText>
        <Controls>
          <ControlButton aria-label='Minimieren'>
            <svg width='13' height='11' viewBox='0 0 13 11'>
              <path d='M.5 6.500h12v3H.5z' fill='#fff' stroke='#5a6484' />
            </svg>
          </ControlButton>
          <ControlButton aria-label='Maximieren'>
            <svg width='12' height='11' viewBox='0 0 12 11'>
              <path d='M.5.500h11v9H.5zM4 4h4v2.500H4z' fill='#fff' stroke='#5a6484' fillRule='evenodd' />
            </svg>
          </ControlButton>
          <ControlButton aria-label='Schließen' $wide>
            <svg width='13' height='11' viewBox='0 0 13 11'>
              <path d='M1 .5h3.500L6.500 3l2-2.500H12L8.500 5l3.500 4.500H8.500L6.500 7l-2 2.500H1L4.500 5z' fill='#fff' stroke='#5a6484' />
            </svg>
          </ControlButton>
        </Controls>
      </TitleBar>
      <Client>
        <MenuBar>
          {menus.map((text) => (
            <MenuItem key={text}>{text}</MenuItem>
          ))}
        </MenuBar>
        <ToolRow $columns='630fr 511fr'>
          <Strip list={fileTools} />
          <Strip list={viewTools} />
        </ToolRow>
        <ToolRow $columns='283fr 347fr 511fr'>
          <Strip list={pickTools} />
          <Strip list={orientTools} />
          <Strip list={showTools} />
        </ToolRow>
        <Body>
          <Explorer />
          <Viewport>
            <Scene />
          </Viewport>
          <SideTools>
            <SideStrip list={sketchTools} />
            <SideStrip list={featureTools} />
            <SideStrip list={refTools} />
          </SideTools>
        </Body>
        <StatusBar>
          <StatusCell />
          <StatusEnd>
            <svg width='16' height='16' viewBox='0 0 16 16'>
              <circle cx='8' cy='8' r='7' fill='#28243c' stroke='#b8a878' strokeWidth='1.500' />
              <path d='M8 2l2 5 4 1-4 1-2 5-1-4-5-2 5-1z' fill='#d8c070' />
            </svg>
          </StatusEnd>
        </StatusBar>
      </Client>
    </Window>
  );
}

export default App;

/* ---------- styles ---------- */

const GlobalStyle = createGlobalStyle`
  * {
    box-sizing: border-box;
  }

  body {
    margin: 0;
    background: #10131c;
  }

  button {
    border: 0;
    padding: 0;
    background: none;
    font: inherit;
    color: inherit;
  }

  svg {
    display: block;
    flex: none;
  }
`;

const Window = styled.div`
  display: flex;
  flex-direction: column;
  min-height: 100vh;
  padding: 0 6px 7px;
  border: 1px solid #1e2438;
  border-radius: 8px;
  background: linear-gradient(90deg, #b4c6ee 0, #92a8dc 24%, #8ea4da 70%, #b4c6ee 90%, #a6b8e6 100%);
  box-shadow: inset 0 0 0 1px #c8d6f4;
  font-family: "Open Sans", "Noto Sans", sans-serif;
  font-size: 12px;
`;

const TitleBar = styled.header`
  display: flex;
  align-items: center;
  height: 26px;
  gap: 4px;
`;

const TitleText = styled.span`
  flex: 1;
  color: #1c2030;
`;

const Controls = styled.div`
  display: flex;
  align-self: flex-start;
  margin-right: 4px;
  border: 1px solid #6b7899;
  border-top: 0;
  border-radius: 0 0 5px 5px;
  background: linear-gradient(#c8d4f0, #a8b8e0);
`;

const ControlButton = styled.button`
  display: flex;
  align-items: center;
  justify-content: center;
  width: ${({ $wide }) => ($wide ? "41px" : "25px")};
  height: 16px;

  & + & {
    border-left: 1px solid #6b7899;
  }
`;

const Client = styled.main`
  display: flex;
  flex: 1;
  flex-direction: column;
  border: 1px solid #56617f;
  background: #f0f0f0;
`;

const MenuBar = styled.nav`
  display: flex;
  align-items: center;
  height: 20px;
  padding-left: 7px;
  gap: 10px;
  border-bottom: 1px solid #a0a4b0;
  background: linear-gradient(#ffffff, #e6eaf6 45%, #d4daee 55%, #e2e7f6);
`;

const MenuItem = styled.button`
  color: #7c7c80;
`;

const ToolRow = styled.div`
  display: grid;
  grid-template-columns: ${({ $columns }) => $columns};
  height: 30px;
  border-bottom: 1px solid #a8a8a8;
`;

const StripBox = styled.div`
  display: flex;
  align-items: center;
  min-width: 0;
  border-top: 1px solid #fff;

  & + & {
    border-left: 1px solid #a0a0a0;
  }
`;

const Grip = styled.span`
  flex: none;
  width: 3px;
  height: 22px;
  margin: 0 5px 0 4px;
  border-left: 1px solid #fff;
  border-right: 1px solid #a0a0a0;
`;

const ToolButton = styled.button`
  display: flex;
  flex: none;
  align-items: center;
  justify-content: center;
  width: 22px;
  height: 22px;
  border-style: solid;
  border-width: 1px;
  border-color: ${({ $pressed }) => ($pressed ? "#a0a0a0 #fff #fff #a0a0a0" : "transparent")};
  background: ${({ $pressed }) => ($pressed ? "#f8f8f8" : "none")};
`;

const DropButton = styled.button`
  display: flex;
  flex: none;
  align-items: center;
  justify-content: center;
  width: ${({ $vertical }) => ($vertical ? "22px" : "12px")};
  height: ${({ $vertical }) => ($vertical ? "12px" : "22px")};
`;

const Divider = styled.span`
  flex: none;
  background: #a0a0a0;
  width: ${({ $vertical }) => ($vertical ? "22px" : "1px")};
  height: ${({ $vertical }) => ($vertical ? "1px" : "22px")};
  margin: ${({ $vertical }) => ($vertical ? "3px 0 2px" : "0 2px")};
`;

const IconSvg = styled.svg`
  width: 20px;
  height: 20px;
`;

const Body = styled.div`
  display: flex;
  flex: 1;
  min-height: 0;
`;

const ExplorerPanel = styled.aside`
  display: flex;
  flex: none;
  flex-direction: column;
  width: 164px;
  padding: 0 3px 1px;
  border-right: 3px solid #a0a0a0;
`;

const ExplorerTitle = styled.h2`
  height: 18px;
  margin: 0 0 3px;
  border-bottom: 1px solid #b4c6dc;
  color: #9ab2d2;
  font: bold 12px/18px "Liberation Sans", Arial, sans-serif;
`;

const TreeBox = styled.div`
  display: flex;
  flex: 1;
  flex-direction: column;
  min-width: 0;
  overflow: hidden;
  border: 1px solid #646464;
  background: #fff;
  font: 11px/14px Lato, "Liberation Sans", Arial, sans-serif;
`;

const TreeList = styled.ul`
  flex: 1;
  margin: 0;
  padding: 0;
  list-style: none;
`;

const TreeRow = styled.li`
  display: flex;
  align-items: center;
  height: 16px;
  padding-left: ${({ $level }) => 7 + $level * 19}px;
  white-space: nowrap;
`;

const Expander = styled.button`
  flex: none;
  width: 9px;
  height: 9px;
  margin-right: 5px;
`;

const TreeIcon = styled.svg`
  width: 20px;
  height: 20px;
  margin: 0 -1px 0 ${({ $alone }) => ($alone ? "13px" : "-1px")};
`;

const TreeLabel = styled.button`
  padding: 0 1px;
  outline: ${({ $root }) => ($root ? "1px dotted #000" : "none")};
  background: ${({ $selected }) => ($selected ? "#3399ff" : "none")};
  color: ${({ $selected, $muted }) => ($selected ? "#fff" : $muted ? "#b8b8b8" : "#000")};
`;

const ScrollBar = styled.div`
  display: flex;
  height: 16px;
  background: #ececec;
`;

const ScrollArrow = styled.button`
  display: flex;
  flex: none;
  align-items: center;
  justify-content: center;
  width: 18px;

  &:last-child {
    margin-left: auto;
  }
`;

const Thumb = styled.div`
  display: flex;
  align-items: center;
  justify-content: center;
  width: 40px;
  gap: 2px;
  border: 1px solid #8c8c8c;
  border-radius: 2px;
  background: linear-gradient(#f8f8f8, #e4e4e4 45%, #cfcfcf);

  i {
    width: 1px;
    height: 7px;
    background: #404040;
  }
`;

const Viewport = styled.section`
  flex: 1;
  min-width: 0;
  background: #4474bb;
`;

const SceneSvg = styled.svg`
  width: 100%;
  height: 100%;
`;

const SideTools = styled.div`
  display: flex;
  flex: none;
  width: 89px;
  border-left: 1px solid #fff;
`;

const SideBox = styled.div`
  display: flex;
  flex: 1;
  flex-direction: column;
  align-items: center;
  border-right: 1px solid #a0a0a0;
  border-bottom: 1px solid #a0a0a0;
`;

const SideGrip = styled.span`
  width: 22px;
  height: 3px;
  margin: 3px 0 5px;
  border-top: 1px solid #fff;
  border-bottom: 1px solid #a0a0a0;
`;

const StatusBar = styled.footer`
  display: flex;
  height: 20px;
  padding: 1px 2px 1px 1px;
`;

const StatusCell = styled.div`
  flex: 1;
  border-top: 1px solid #a0a0a0;
  border-left: 1px solid #a0a0a0;
`;

const StatusEnd = styled.div`
  display: flex;
  align-items: center;
  justify-content: flex-end;
  width: 72px;
  padding-right: 4px;
  border-top: 1px solid #a0a0a0;
  border-left: 1px solid #a0a0a0;
`;
